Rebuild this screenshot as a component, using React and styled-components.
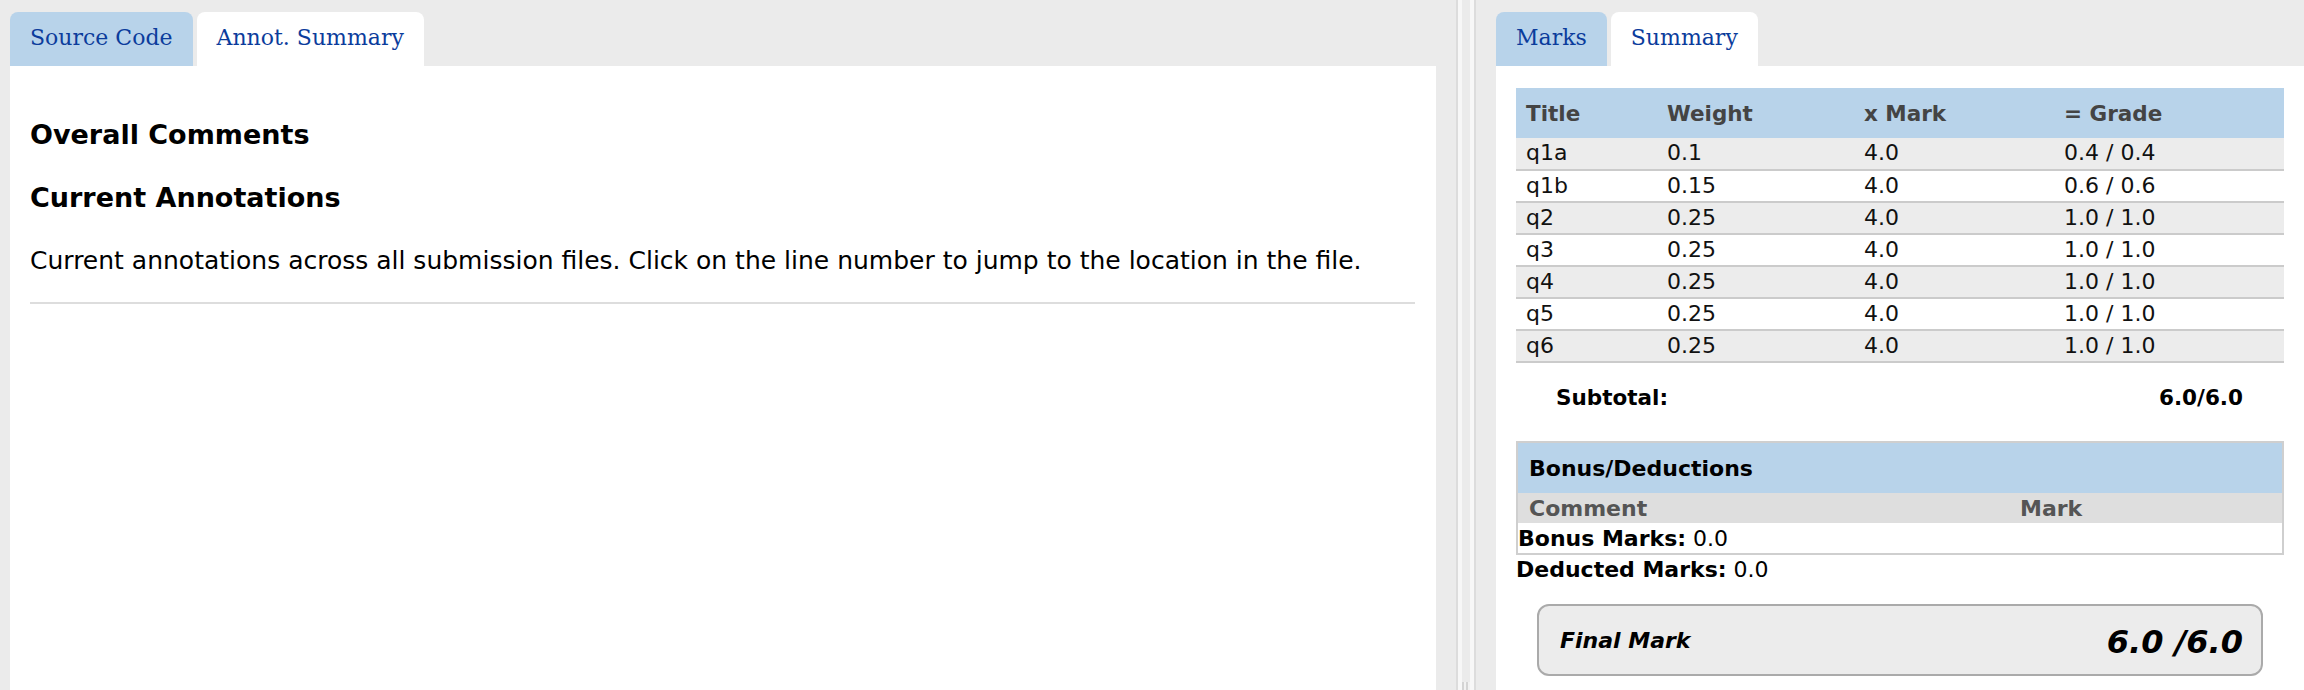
import React from "react";
import styled, { createGlobalStyle } from "styled-components";

const GlobalStyle = createGlobalStyle`
  html, body { margin: 0; padding: 0; }
  body {
    background: #ebebeb;
    font-family: "DejaVu Sans", "Liberation Sans", sans-serif;
    color: #000;
    overflow: hidden;
  }
  * { box-sizing: border-box; }
`;

const Page = styled.div`
  display: flex;
  height: 690px;
  padding-left: 10px;
`;

const Column = styled.div`
  display: flex;
  flex-direction: column;
  ${(p) => (p.$width ? `width: ${p.$width}px; flex: 0 0 ${p.$width}px;` : "flex: 1;")}
`;

const TabBar = styled.div`
  display: flex;
  gap: 4px;
  padding-top: 12px;
  height: 66px;
`;

const Tab = styled.div`
  height: 54px;
  padding: 0 20px 3px;
  display: flex;
  align-items: center;
  border-radius: 8px 8px 0 0;
  background: ${(p) => (p.$active ? "#ffffff" : "#b8d3ea")};
  color: #0b3c9c;
  font-family: "DejaVu Serif", "Liberation Serif", serif;
  font-size: 22px;
  cursor: pointer;
`;

const Panel = styled.div`
  flex: 1;
  background: #fff;
  padding: ${(p) => p.$pad};
`;

const Heading = styled.h3`
  margin: ${(p) => p.$top}px 0 0;
  font-size: 27px;
  line-height: 32px;
  font-weight: bold;
`;

const Body = styled.p`
  margin: 31px 0 0;
  font-size: 25px;
  line-height: 32px;
`;

const Rule = styled.hr`
  margin: 25px 0 0;
  border: 0;
  border-top: 2px solid #dddddd;
`;

const Splitter = styled.div`
  width: 20px;
  margin: 0 20px;
  border-left: 2px solid #dcdcdc;
  border-right: 2px solid #dcdcdc;
  background: linear-gradient(
    to right,
    #f7f7f7 0 4px,
    #ebebeb 4px 12px,
    #f7f7f7 12px 16px
  );
  display: flex;
  flex-direction: column;
  justify-content: flex-end;
  align-items: center;
`;

const Grip = styled.div`
  width: 8px;
  height: 8px;
  background: repeating-linear-gradient(
    to right,
    #d4d4d4 0 2px,
    #f2f2f2 2px 4px
  );
`;

const Table = styled.table`
  width: 100%;
  border-collapse: collapse;
  table-layout: fixed;
`;

const Th = styled.th`
  height: 50px;
  padding: 0 10px;
  background: #b8d3ea;
  color: #444;
  font-size: 21.5px;
  font-weight: bold;
  text-align: left;
`;

const Tr = styled.tr`
  background: ${(p) => (p.$alt ? "#ececec" : "#ffffff")};
`;

const Td = styled.td`
  height: 32px;
  padding: 0 10px 2px;
  font-size: 22px;
  border-bottom: 2px solid #cbcbcb;
  color: #111;
`;

const Subtotal = styled.div`
  display: flex;
  justify-content: space-between;
  align-items: center;
  height: 68px;
  padding: 0 41px 0 40px;
  margin-bottom: 10px;
  font-size: 21.5px;
  font-weight: bold;
`;

const BonusBox = styled.div`
  border: 2px solid #cfcfcf;
`;

const BonusHeader = styled.div`
  height: 50px;
  display: flex;
  align-items: center;
  padding-left: 11px;
  background: #b8d3ea;
  font-size: 22px;
  font-weight: bold;
`;

const BonusCols = styled.div`
  display: grid;
  grid-template-columns: 491px 1fr;
  height: 30px;
  align-items: center;
  background: #dedede;
  color: #555;
  font-size: 22px;
  font-weight: bold;
  padding-left: 11px;
`;

const Line = styled.div`
  height: ${(p) => p.$h}px;
  display: flex;
  align-items: center;
  padding-left: ${(p) => p.$pl || 0}px;
  font-size: 22px;
  background: #fff;
  white-space: pre;
`;

const B = styled.span`
  font-weight: bold;
`;

const FinalBox = styled.div`
  margin: 21px 21px 0;
  height: 72px;
  border: 2px solid #aaaaaa;
  border-radius: 12px;
  background: #ececec;
  display: flex;
  justify-content: space-between;
  align-items: center;
  padding: 0 18px 0 21px;
  font-style: italic;
  font-weight: bold;
`;

const FinalLabel = styled.span`
  font-size: 22px;
`;

const FinalValue = styled.span`
  font-size: 32px;
  padding-top: 4px;
`;

const rows = [
  ["q1a", "0.1", "4.0", "0.4 / 0.4"],
  ["q1b", "0.15", "4.0", "0.6 / 0.6"],
  ["q2", "0.25", "4.0", "1.0 / 1.0"],
  ["q3", "0.25", "4.0", "1.0 / 1.0"],
  ["q4", "0.25", "4.0", "1.0 / 1.0"],
  ["q5", "0.25", "4.0", "1.0 / 1.0"],
  ["q6", "0.25", "4.0", "1.0 / 1.0"],
];

export default function App() {
  return (
    <>
      <GlobalStyle />
      <Page>
        <Column $width={1426}>
          <TabBar>
            <Tab>Source Code</Tab>
            <Tab $active>Annot. Summary</Tab>
          </TabBar>
          <Panel $pad="0 21px 0 20px">
            <Heading $top={53}>Overall Comments</Heading>
            <Heading $top={31}>Current Annotations</Heading>
            <Body>
              Current annotations across all submission files. Click on the line
              number to jump to the location in the file.
            </Body>
            <Rule />
          </Panel>
        </Column>
        <Splitter>
          <Grip />
        </Splitter>
        <Column>
          <TabBar>
            <Tab>Marks</Tab>
            <Tab $active>Summary</Tab>
          </TabBar>
          <Panel $pad="22px 20px 0">
            <Table>
              <colgroup>
                <col style={{ width: 141 }} />
                <col style={{ width: 197 }} />
                <col style={{ width: 200 }} />
                <col />
              </colgroup>
              <thead>
                <tr>
                  <Th>Title</Th>
                  <Th>Weight</Th>
                  <Th>x Mark</Th>
                  <Th>= Grade</Th>
                </tr>
              </thead>
              <tbody>
                {rows.map((r, i) => (
                  <Tr key={r[0]} $alt={i % 2 === 0}>
                    {r.map((c, j) => (
                      <Td key={j}>{c}</Td>
                    ))}
                  </Tr>
                ))}
              </tbody>
            </Table>
            <Subtotal>
              <span>Subtotal:</span>
              <span>6.0/6.0</span>
            </Subtotal>
            <BonusBox>
              <BonusHeader>Bonus/Deductions</BonusHeader>
              <BonusCols>
                <span>Comment</span>
                <span>Mark</span>
              </BonusCols>
              <Line $h={30}>
                <B>Bonus Marks:</B> 0.0
              </Line>
            </BonusBox>
            <Line $h={28}>
              <B>Deducted Marks:</B> 0.0
            </Line>
            <FinalBox>
              <FinalLabel>Final Mark</FinalLabel>
              <FinalValue>6.0 /6.0</FinalValue>
            </FinalBox>
          </Panel>
        </Column>
      </Page>
    </>
  );
}
